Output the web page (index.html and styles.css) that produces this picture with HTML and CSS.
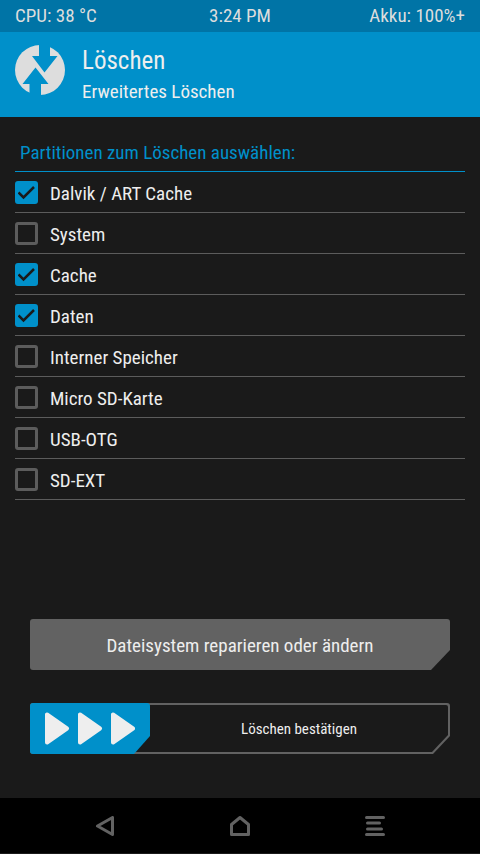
FILE: index.html
```html
<!DOCTYPE html>
<html lang="de">
<head>
<meta charset="utf-8">
<meta name="viewport" content="width=device-width, initial-scale=1">
<title>Erweitertes Löschen</title>
<link rel="stylesheet" href="styles.css">
</head>
<body>
<div class="status"><span>CPU: 38 °C</span><span>3:24 PM</span><span>Akku: 100%+</span></div>
<header class="header">
  <svg class="logo" viewBox="0 0 50 50" aria-hidden="true">
    <circle cx="25" cy="25" r="25" fill="#ddd"/>
    <path fill="#0090ca" d="M24 -1H35V11H42.500L29.500 27.500L17 11H24Z"/>
    <path fill="#0090ca" d="M26 51H14.500V39H7.500L20.500 22.500L33.500 39H26Z"/>
  </svg>
  <div class="titles">
    <h1>Löschen</h1>
    <p>Erweitertes Löschen</p>
  </div>
</header>
<main class="main">
  <fieldset class="partitions">
    <legend>Partitionen zum Löschen auswählen:</legend>
    <label class="row"><input type="checkbox" checked><span>Dalvik / ART Cache</span></label>
    <label class="row"><input type="checkbox"><span>System</span></label>
    <label class="row"><input type="checkbox" checked><span>Cache</span></label>
    <label class="row"><input type="checkbox" checked><span>Daten</span></label>
    <label class="row"><input type="checkbox"><span>Interner Speicher</span></label>
    <label class="row"><input type="checkbox"><span>Micro SD-Karte</span></label>
    <label class="row"><input type="checkbox"><span>USB-OTG</span></label>
    <label class="row"><input type="checkbox"><span>SD-EXT</span></label>
  </fieldset>
  <div class="actions">
    <button class="repair" type="button">Dateisystem reparieren oder ändern</button>
    <button class="confirm" type="button">
      <span class="track"></span>
      <span class="handle">
        <svg viewBox="0 0 90 33" aria-hidden="true">
          <g fill="#eee" stroke="#eee" stroke-width="4" stroke-linejoin="round">
            <path d="M2 2.500V30.500L22 16.500Z"/>
            <path d="M35 2.500V30.500L55 16.500Z"/>
            <path d="M68 2.500V30.500L88 16.500Z"/>
          </g>
        </svg>
      </span>
      <span class="caption">Löschen bestätigen</span>
    </button>
  </div>
</main>
<nav class="nav">
  <button type="button" aria-label="Zurück"><svg viewBox="0 0 20 20"><path d="M17.500 1.500V18.500L2.500 10Z"/></svg></button>
  <button type="button" aria-label="Startseite"><svg viewBox="0 0 20 20"><path d="M1.500 8.500L10 1.500L18.500 8.500V18.500H1.500Z"/></svg></button>
  <button type="button" aria-label="Menü"><svg viewBox="0 0 20 20"><path d="M1.500 1.500H18.500M2.500 7H14.500M2.500 13H16.500M1.500 18.500H18.500"/></svg></button>
</nav>
</body>
</html>
```
FILE: styles.css
```css
* { box-sizing: border-box; }

body {
  margin: 0;
  min-height: 100vh;
  display: flex;
  flex-direction: column;
  background: #1a1a1a;
  color: #eee;
  font: 19px/24px "Roboto Condensed", "Liberation Sans Narrow", Roboto, sans-serif;
}

button { font: inherit; color: inherit; border: 0; padding: 0; background: none; }

.status {
  display: grid;
  grid-template-columns: 1fr auto 1fr;
  height: 32px;
  padding: 4px 15px;
  background: #0074a6;
  color: #ddd;
}
.status span:last-child { text-align: right; }

.header {
  display: flex;
  gap: 17px;
  height: 85px;
  padding: 13px 15px;
  background: #0090ca;
  color: #eee;
}
.logo { width: 50px; height: 50px; }
.titles h1 { margin: 0; font-size: 25px; line-height: 32px; font-weight: 400; }
.titles p { margin: 3px 0 0; }

.main { flex: 1; display: flex; flex-direction: column; padding: 24px 15px 44px; }

.partitions { margin: 0; padding: 0; border: 0; min-width: 0; }
.partitions legend {
  width: 100%;
  padding: 0 5px 6px;
  border-bottom: 1px solid #0090ca;
  color: #0090ca;
}
.row {
  display: flex;
  align-items: center;
  gap: 12px;
  height: 41px;
  border-bottom: 1px solid #5c5c5c;
}
.row span { padding-top: 4px; }
.row input {
  appearance: none;
  width: 23px;
  height: 23px;
  margin: 0;
  border: 3px solid #5c5c5c;
  border-radius: 3px;
}
.row input:checked {
  border-color: #0090ca;
  background: #0090ca url("data:image/svg+xml,%3Csvg xmlns='http://www.w3.org/2000/svg' viewBox='0 0 19 19'%3E%3Cpath d='M1.500 9.500L6.500 14.500L17 4' fill='none' stroke='%231a1a1a' stroke-width='2.500'/%3E%3C/svg%3E") center / 19px 19px no-repeat border-box;
}

.actions { display: grid; gap: 33px; margin-top: auto; padding: 0 15px; }
.actions button { height: 51px; border-radius: 3px; }
.actions .repair {
  padding-top: 2px;
  background: #626262;
  clip-path: polygon(0 0, 100% 0, 100% calc(100% - 20px), calc(100% - 19px) 100%, 0 100%);
}
.confirm {
  display: grid;
  grid-template-columns: 120px 1fr;
  align-items: center;
  position: relative;
  background: #626262;
  clip-path: polygon(0 0, 100% 0, 100% calc(100% - 18px), calc(100% - 17px) 100%, 0 100%);
}
.track {
  position: absolute;
  inset: 2px;
  border-radius: 2px;
  background: #1a1a1a;
  clip-path: polygon(0 0, 100% 0, 100% calc(100% - 17px), calc(100% - 16px) 100%, 0 100%);
}
.handle {
  position: relative;
  display: grid;
  place-items: center;
  height: 51px;
  border-radius: 3px;
  background: #0090ca;
  clip-path: polygon(0 0, 100% 0, 100% calc(100% - 18px), calc(100% - 16px) 100%, 0 100%);
}
.handle svg { width: 90px; height: 33px; }
.caption { position: relative; padding-right: 2px; font-size: 15px; }

.nav {
  display: flex;
  justify-content: space-around;
  height: 56px;
  padding: 0 38px;
  background: #000;
  border-bottom: 1px solid #1a1a1a;
}
.nav button { display: grid; place-items: center; width: 60px; }
.nav svg {
  width: 20px;
  height: 20px;
  fill: none;
  stroke: #626262;
  stroke-width: 3;
  stroke-linejoin: round;
  stroke-linecap: round;
}
```
